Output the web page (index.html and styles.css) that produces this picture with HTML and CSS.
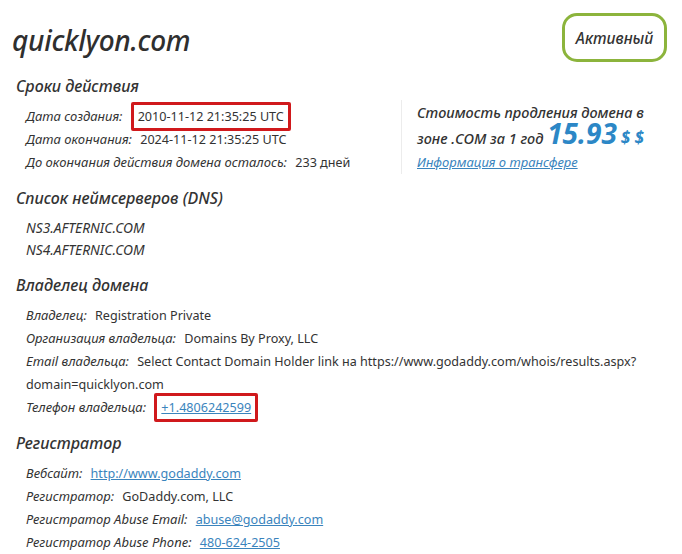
FILE: index.html
```html
<!DOCTYPE html>
<html lang="ru">
<head>
    <meta charset="UTF-8">
    <title>quicklyon.com — whois</title>
    <link rel="stylesheet" href="styles.css">
</head>
<body>

<div class="whois">
    <div class="whois-head">
        <h1 class="domain-name">quicklyon.com</h1>
        <div class="status-badge">Активный</div>
    </div>

    <div class="section-row">
        <div class="section">
            <h2 class="section-title">Сроки действия</h2>
            <div class="row"><span class="label">Дата создания:</span> <span class="marked">2010-11-12 21:35:25 UTC</span></div>
            <div class="row"><span class="label">Дата окончания:</span> 2024-11-12 21:35:25 UTC</div>
            <div class="row"><span class="label">До окончания действия домена осталось:</span> 233 дней</div>
        </div>

        <div class="renew-box">
            <div class="renew-text">Стоимость продления домена в</div>
            <div class="renew-text">зоне .COM за 1 год <span class="price">15.93</span> <span class="currency">$ $</span></div>
            <a class="transfer-link" href="#">Информация о трансфере</a>
        </div>
    </div>

    <div class="section">
        <h2 class="section-title">Список неймсерверов (DNS)</h2>
        <div class="row ns">NS3.AFTERNIC.COM</div>
        <div class="row ns">NS4.AFTERNIC.COM</div>
    </div>

    <div class="section">
        <h2 class="section-title">Владелец домена</h2>
        <div class="row"><span class="label">Владелец:</span> Registration Private</div>
        <div class="row"><span class="label">Организация владельца:</span> Domains By Proxy, LLC</div>
        <div class="row"><span class="label">Email владельца:</span> Select Contact Domain Holder link на https://www.godaddy.com/whois/results.aspx?<br>domain=quicklyon.com</div>
        <div class="row"><span class="label">Телефон владельца:</span> <span class="marked"><a href="#">+1.4806242599</a></span></div>
    </div>

    <div class="section">
        <h2 class="section-title">Регистратор</h2>
        <div class="row"><span class="label">Вебсайт:</span> <a href="#">http://www.godaddy.com</a></div>
        <div class="row"><span class="label">Регистратор:</span> GoDaddy.com, LLC</div>
        <div class="row"><span class="label">Регистратор Abuse Email:</span> <a href="#">abuse@godaddy.com</a></div>
        <div class="row"><span class="label">Регистратор Abuse Phone:</span> <a href="#">480-624-2505</a></div>
    </div>
</div>

</body>
</html>
```

FILE: styles.css
```css
body {
    margin: 0;
    background-color: #ffffff;
    font-family: 'Noto Sans', 'Open Sans', sans-serif;
    color: #333333;
}
a {
    color: #3a84bd;
}
.whois {
    padding: 13px 15px 0 12px;
}
.whois-head {
    display: flex;
    justify-content: space-between;
    align-items: center;
    height: 49px;
}
.domain-name {
    margin: 4px 0 0 0;
    font-size: 28px;
    font-style: italic;
    font-weight: 500;
    letter-spacing: -0.3px;
    color: #2f2f2f;
}
.status-badge {
    box-sizing: border-box;
    height: 49px;
    width: 105px;
    display: flex;
    align-items: center;
    justify-content: center;
    border: 3px solid #8cb43c;
    border-radius: 15px;
    font-size: 15.5px;
    font-style: italic;
    font-weight: 500;
}
.section-row {
    display: flex;
}
.section-row .section {
    width: 385px;
}
.section {
    padding-left: 4px;
    margin-bottom: 12px;
}
.whois-head + .section-row {
    margin-top: 12px;
}
.section-title {
    margin: 0 0 7px 0;
    font-size: 16px;
    line-height: 24px;
    font-style: italic;
    font-weight: 500;
}
.row {
    padding-left: 10px;
    font-size: 12.6px;
    line-height: 23px;
}
.label {
    font-size: 13px;
    font-style: italic;
    margin-right: 5px;
}
.ns {
    font-size: 13.8px;
    font-style: italic;
    line-height: 22px;
}
.marked {
    padding: 3px 4px;
    border: 3px solid #d0191c;
    border-radius: 2px;
}
.renew-box {
    margin-top: 26px;
    height: 74px;
    padding-left: 15px;
    border-left: 1px solid #ececec;
    font-style: italic;
}
.renew-text {
    font-size: 14.5px;
    font-weight: 500;
    line-height: 24px;
}
.price {
    font-size: 28px;
    font-weight: 700;
    color: #2c87c6;
    line-height: 18px;
}
.currency {
    font-size: 17px;
    font-weight: 700;
    color: #2c87c6;
}
.transfer-link {
    font-size: 13px;
    line-height: 22px;
}
```
